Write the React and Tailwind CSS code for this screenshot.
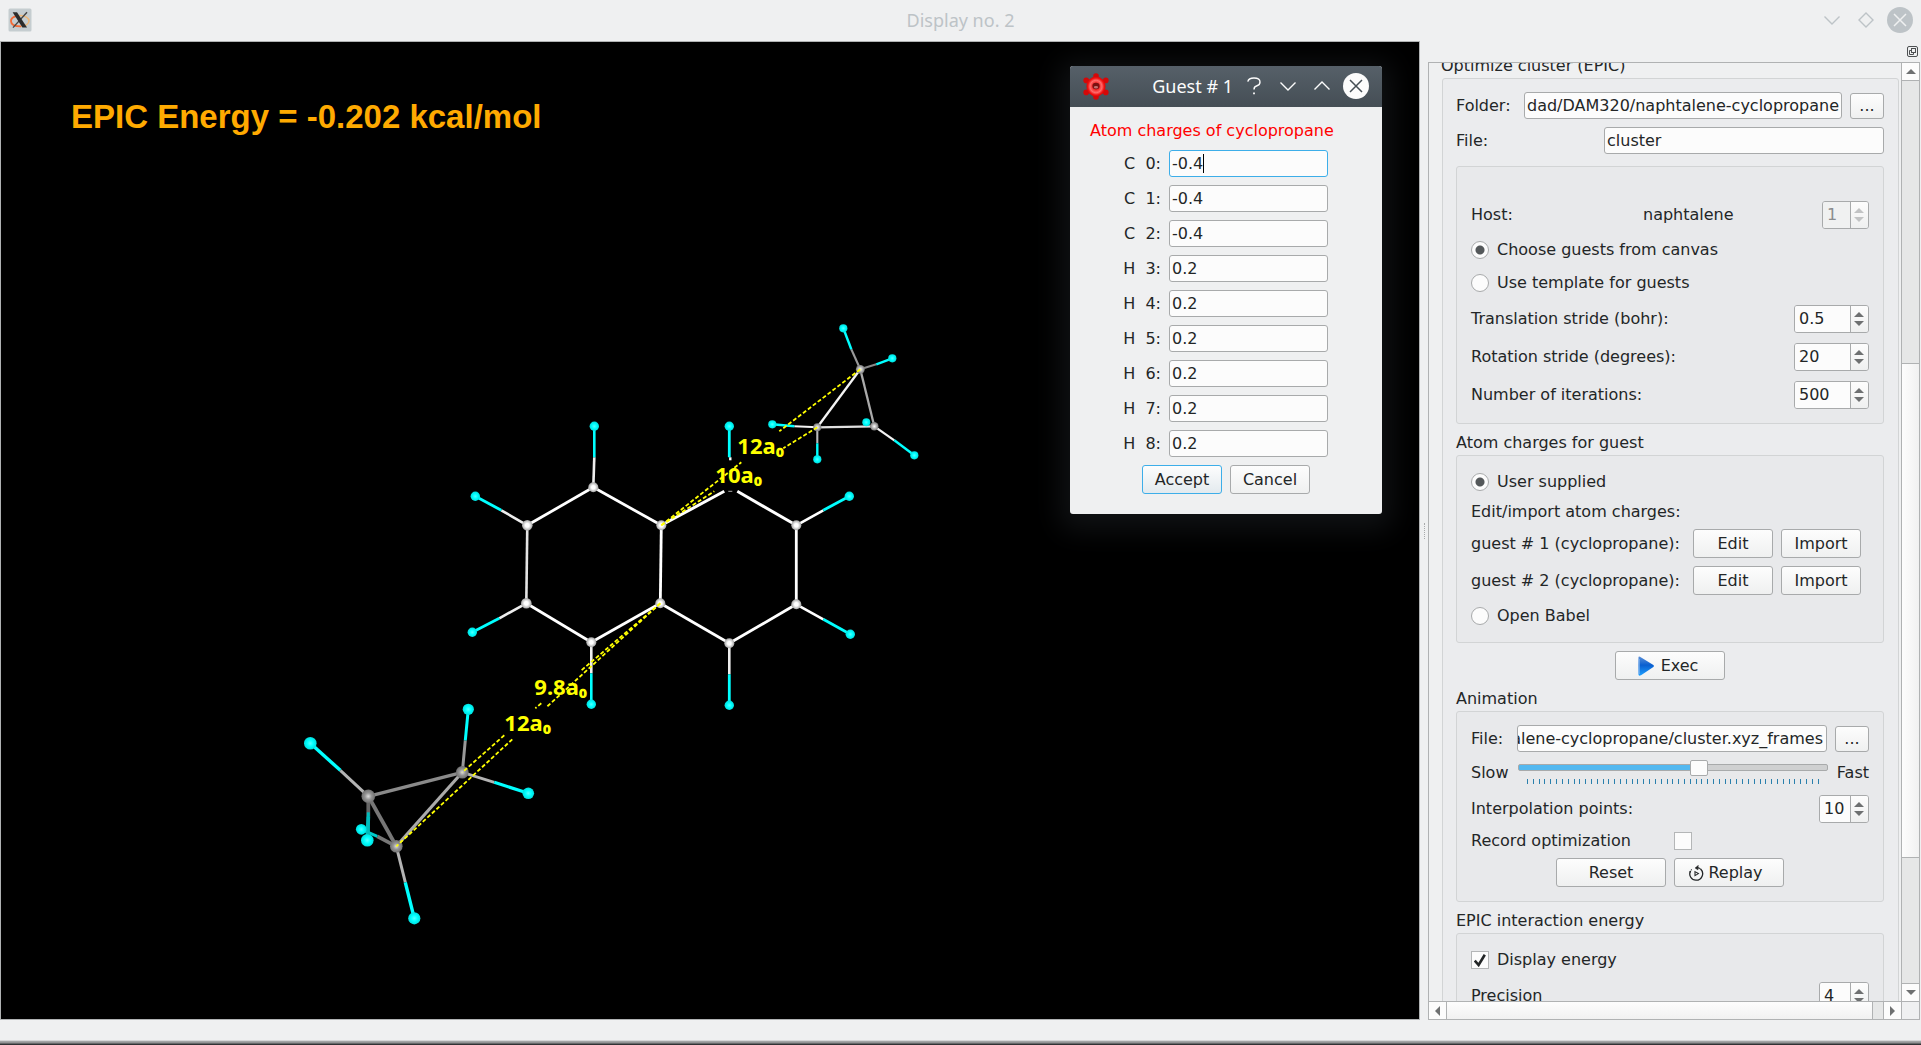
import React from "react";

const ATOM = {
  white: "url(#white)",
  gray: "url(#gray)",
  light: "url(#light)",
  cyan: "url(#cyan)",
};

// x1, y1, x2, y2, colour, width
const BONDS = [
  [593, 487, 527, 525, "#fff", 2.8],
  [527, 525, 526, 603, "#e4e4e4", 2.6],
  [526, 603, 591, 642, "#fff", 2.8],
  [591, 642, 660, 603, "#fff", 2.8],
  [660, 603, 661, 525, "#fff", 2.8],
  [661, 525, 593, 487, "#fff", 2.8],
  [661, 525, 724, 491, "#fff", 3],
  [737, 491, 796, 525, "#fff", 3],
  [728, 491, 732, 491, "#aaa", 1],
  [796, 525, 796, 604, "#fff", 2.8],
  [796, 604, 729, 643, "#fff", 2.8],
  [729, 643, 660, 603, "#fff", 2.8],
  [593, 487, 594, 457, "#eee", 2.6],
  [594, 457, 594, 426, "#0ff", 2.6],
  [527, 525, 501, 510, "#eee", 2.6],
  [501, 510, 475, 496, "#0ff", 2.8],
  [526, 603, 499, 618, "#eee", 2.6],
  [499, 618, 472, 632, "#0ff", 2.8],
  [591, 642, 591, 673, "#eee", 2.6],
  [591, 673, 591, 704, "#0ff", 2.6],
  [729, 643, 729, 674, "#eee", 2.6],
  [729, 674, 729, 705, "#0ff", 2.8],
  [796, 604, 823, 619, "#fff", 2.6],
  [823, 619, 850, 634, "#0ff", 2.8],
  [796, 525, 823, 510, "#fff", 2.6],
  [823, 510, 849, 496, "#0ff", 2.8],
  [729, 426, 729, 457, "#0ff", 2.8],
  [730, 457, 730, 460, "#fff", 2.4],

  [860, 369, 817, 427, "#f4f4f4", 2.3],
  [860, 369, 874, 426, "#aaa", 2.3],
  [817, 427, 874, 426, "#e0e0e0", 2.3],
  [860, 369, 851, 349, "#999", 2.1],
  [851, 349, 843, 328, "#0ff", 2.4],
  [860, 369, 876, 364, "#888", 2.1],
  [876, 364, 892, 358, "#0ff", 2.4],
  [817, 427, 794, 426, "#f4f4f4", 2.1],
  [794, 426, 772, 424, "#0ff", 2.4],
  [817, 427, 817, 443, "#bbb", 2.1],
  [817, 443, 817, 459, "#0ff", 2.4],
  [874, 426, 894, 440, "#f4f4f4", 2.2],
  [894, 440, 914, 455, "#0ff", 2.4],

  [396, 846, 377, 836, "#777", 3.6],
  [377, 836, 361, 829, "#0cc", 3],
  [368, 796, 396, 846, "#777", 3.8],
  [462, 772, 368, 796, "#8a8a8a", 3.4],
  [462, 772, 396, 846, "#aaa", 3.2],
  [462, 772, 465, 740, "#999", 3],
  [465, 740, 468, 709, "#0ff", 3],
  [462, 772, 494, 782, "#b4b4b4", 2.8],
  [494, 782, 528, 793, "#0ff", 3.2],
  [368, 796, 340, 770, "#b4b4b4", 3],
  [340, 770, 310, 743, "#0ff", 3.4],
  [368, 796, 368, 816, "#666", 3.8],
  [368, 816, 367, 840, "#0bb", 3.8],
  [396, 846, 405, 882, "#b4b4b4", 3],
  [405, 882, 414, 918, "#0ff", 3.4],
];

// x, y, radius, fill
const ATOMS = [
  [593, 487, 5, "white"],
  [527, 525, 5.3, "white"],
  [526, 603, 5.3, "white"],
  [591, 642, 5, "white"],
  [660, 603, 5, "white"],
  [661, 525, 5, "white"],
  [796, 525, 5, "white"],
  [796, 604, 5, "white"],
  [729, 643, 5, "white"],
  [594, 426, 4.7, "cyan"],
  [475, 496, 4.7, "cyan"],
  [472, 632, 4.7, "cyan"],
  [591, 704, 4.7, "cyan"],
  [729, 705, 4.7, "cyan"],
  [850, 634, 4.7, "cyan"],
  [849, 496, 4.7, "cyan"],
  [729, 426, 4.7, "cyan"],
  [860, 369, 4.4, "light"],
  [817, 427, 4, "light"],
  [866, 422, 4, "cyan"],
  [874, 426, 4.2, "light"],
  [843, 328, 4.1, "cyan"],
  [892, 358, 4.1, "cyan"],
  [772, 424, 4.1, "cyan"],
  [817, 459, 4.1, "cyan"],
  [914, 455, 4.1, "cyan"],
  [462, 772, 6.3, "gray"],
  [368, 796, 6.8, "gray"],
  [396, 846, 6.3, "gray"],
  [468, 709, 5.6, "cyan"],
  [528, 793, 5.8, "cyan"],
  [310, 743, 6.3, "cyan"],
  [361, 829, 5.4, "cyan"],
  [367, 840, 6.3, "cyan"],
  [414, 918, 6.1, "cyan"],
];

const DASHES = [
  [860, 369, 779, 431],
  [817, 427, 783, 448],
  [661, 525, 741, 462],
  [661, 525, 714, 491],
  [660, 603, 580, 671],
  [660, 603, 546, 707],
  [541, 703, 535, 708],
  [504, 735, 462, 772],
  [512, 739, 396, 846],
];

const DISTANCES = [
  [737, 454, "12a₀"],
  [715, 483, "10a₀"],
  [534, 695, "9.8a₀"],
  [504, 731, "12a₀"],
];

function Molecules() {
  return (
    <svg className="absolute left-0 top-0" width="1418" height="977" viewBox="0.7 41.7 1418 977" aria-label="Naphtalene with two cyclopropane guests">
      <defs>
        <radialGradient id="white">
          <stop offset="0.35" stopColor="#fff" />
          <stop offset="1" stopColor="#a4a4a4" />
        </radialGradient>
        <radialGradient id="light">
          <stop offset="0" stopColor="#fff" />
          <stop offset="1" stopColor="#777" />
        </radialGradient>
        <radialGradient id="gray">
          <stop offset="0" stopColor="#ddd" />
          <stop offset="0.5" stopColor="#949494" />
          <stop offset="1" stopColor="#707070" />
        </radialGradient>
        <radialGradient id="cyan">
          <stop offset="0" stopColor="#5ff" />
          <stop offset="0.5" stopColor="#0ff" />
          <stop offset="1" stopColor="#00dede" />
        </radialGradient>
      </defs>
      {BONDS.map(([x1, y1, x2, y2, c, w], i) => (
        <line key={i} x1={x1} y1={y1} x2={x2} y2={y2} stroke={c} strokeWidth={w} />
      ))}
      {ATOMS.map(([x, y, r, f], i) => (
        <circle key={i} cx={x} cy={y} r={r} fill={ATOM[f]} />
      ))}
      <path d="M368 812V834" stroke="#0bb" strokeWidth="3" />
      {DASHES.map(([x1, y1, x2, y2], i) => (
        <line key={i} x1={x1} y1={y1} x2={x2} y2={y2} stroke="#ff0" strokeWidth="1.8" strokeDasharray="4 2.2" />
      ))}
      {DISTANCES.map(([x, y, t], i) => (
        <text key={i} x={x} y={y} fill="#ff0" className="font-['Noto_Sans',sans-serif] text-[22px] font-bold">
          {t}
        </text>
      ))}
    </svg>
  );
}

const FIELD =
  "h-[27px] min-w-0 rounded-[3px] border border-[#a8aaab] bg-[#fcfcfc] px-0.5 text-[#232627] outline-none";
const BTN =
  "flex shrink-0 items-center justify-center rounded-[3px] border border-[#a8aaab] bg-linear-to-b from-[#fdfdfd] to-[#eff0f0] text-[#232627]";

function Button({ className = "", children, ...rest }) {
  return (
    <button type="button" className={`${BTN} ${className}`} {...rest}>
      {children}
    </button>
  );
}

function Arrow({ dir, className = "" }) {
  const d = { up: "M0 5L5 0L10 5Z", down: "M0 0L5 5L10 0Z", left: "M5 0V10L0 5Z", right: "M0 0V10L5 5Z" }[dir];
  const flat = dir === "up" || dir === "down";
  return (
    <svg className={className} width={flat ? 10 : 5} height={flat ? 5 : 10} viewBox={flat ? "0 0 10 5" : "0 0 5 10"} fill="currentColor" aria-hidden="true">
      <path d={d} />
    </svg>
  );
}

function Spin({ id, value, width, disabled, label }) {
  return (
    <div
      className={`flex h-7 shrink-0 overflow-hidden rounded-[3px] border border-[#a8aaab] ${width} ${disabled ? "text-[#8a8c8d]" : "text-[#232627]"}`}
    >
      <input
        id={id}
        aria-label={label}
        disabled={disabled}
        defaultValue={value}
        className={`w-0 min-w-0 flex-1 pl-1 outline-none ${disabled ? "bg-[#f0f1f1]" : "bg-[#fcfcfc]"}`}
      />
      <div
        className={`flex w-[18px] flex-col items-center border-l border-[#a8aaab] bg-linear-to-b from-[#fdfdfd] to-[#eff0f0] pr-px ${disabled ? "text-[#c2c3c4]" : "text-[#6e7071]"}`}
      >
        <button type="button" disabled={disabled} aria-label="Increase" className="flex flex-1 items-center justify-center pt-1">
          <Arrow dir="up" />
        </button>
        <button type="button" disabled={disabled} aria-label="Decrease" className="flex flex-1 items-center justify-center pb-1">
          <Arrow dir="down" />
        </button>
      </div>
    </div>
  );
}

function Radio({ name, label, checked, className = "" }) {
  return (
    <label className={`flex items-center gap-2 ${className}`}>
      <input
        type="radio"
        name={name}
        defaultChecked={checked}
        className="size-[18px] shrink-0 appearance-none rounded-full border border-[#a8aaab] bg-[#fcfcfc] checked:bg-[radial-gradient(circle,#54585a_0_4px,#fcfcfc_5px)]"
      />
      {label}
    </label>
  );
}

function Check({ id, checked, label }) {
  return (
    <span className="relative grid size-[18px] shrink-0 place-items-center">
      <input
        id={id}
        type="checkbox"
        aria-label={label}
        defaultChecked={checked}
        className="peer col-start-1 row-start-1 size-[18px] appearance-none border border-[#b4b6b7] bg-[#fcfcfc]"
      />
      <svg className="pointer-events-none col-start-1 row-start-1 hidden peer-checked:block" width="12" height="13" viewBox="0 0 12 13" aria-hidden="true">
        <path d="M0.8 6.6L4.6 11L10.8 0.8" fill="none" stroke="#232627" strokeWidth="2.6" />
      </svg>
    </span>
  );
}

const GROUP = "rounded-[3px] border border-[#d2d4d5] bg-[#e8e9eb] px-[14px]";

function Slider() {
  const ticks = Array.from({ length: 51 }, (_, i) => i);
  return (
    <div className="flex-1">
      <div className="grid h-[15px] items-center">
        <input
          type="range"
          aria-label="Speed"
          min="0"
          max="100"
          defaultValue="59"
          className="col-start-1 row-start-1 h-[15px] w-full appearance-none bg-transparent [&::-webkit-slider-runnable-track]:h-[7px] [&::-webkit-slider-runnable-track]:rounded-[2px] [&::-webkit-slider-runnable-track]:border [&::-webkit-slider-runnable-track]:border-[#a8aaab] [&::-webkit-slider-runnable-track]:bg-[linear-gradient(90deg,#53b8f0_0_58%,#cfd0d1_58%)] [&::-webkit-slider-thumb]:-mt-[5px] [&::-webkit-slider-thumb]:h-4 [&::-webkit-slider-thumb]:w-[18px] [&::-webkit-slider-thumb]:appearance-none [&::-webkit-slider-thumb]:rounded-[2px] [&::-webkit-slider-thumb]:border [&::-webkit-slider-thumb]:border-[#a8aaab] [&::-webkit-slider-thumb]:bg-[#fcfcfc]"
        />
      </div>
      <div className="mt-1 flex h-[5px] justify-between px-[9px]">
        {ticks.map((i) => (
          <span key={i} className="w-px bg-[#2a80ad]" />
        ))}
      </div>
    </div>
  );
}

function Dock() {
  return (
    <div className="-mt-[10px] flex flex-col pl-3 pr-0.5">
      <h2 className="h-[25px] leading-[25px]">Optimize cluster (EPIC)</h2>
      <section className="ml-px flex flex-col rounded-[3px] border border-[#d2d4d5] bg-[#ebecee] pl-[13px] pr-[14px] pt-[13px]">
        <div className="flex items-center">
          <label htmlFor="folder" className="w-[68px]">Folder:</label>
          <input id="folder" defaultValue="dad/DAM320/naphtalene-cyclopropane" className={`${FIELD} w-0 flex-1`} />
          <Button className="ml-2 h-[26px] w-[34px]" aria-label="Browse folder">...</Button>
        </div>
        <div className="mt-2 flex items-center justify-between">
          <label htmlFor="file">File:</label>
          <input id="file" defaultValue="cluster" className={`${FIELD} w-[280px]`} />
        </div>

        <div className={`${GROUP} mt-3 pb-[14px] pt-[34px]`}>
          <div className="flex items-center">
            <label htmlFor="host" className="w-[172px]">Host:</label>
            <span className="flex-1">naphtalene</span>
            <Spin id="host" value="1" width="w-[47px]" disabled />
          </div>
          <Radio name="guests" label="Choose guests from canvas" checked className="mt-[9px] h-6" />
          <Radio name="guests" label="Use template for guests" className="mt-[9px] h-6" />
          <div className="mt-[10px] flex flex-col gap-[10px]">
            <div className="flex items-center justify-between">
              <label htmlFor="trans">Translation stride (bohr):</label>
              <Spin id="trans" value="0.5" width="w-[75px]" />
            </div>
            <div className="flex items-center justify-between">
              <label htmlFor="rot">Rotation stride (degrees):</label>
              <Spin id="rot" value="20" width="w-[75px]" />
            </div>
            <div className="flex items-center justify-between">
              <label htmlFor="iter">Number of iterations:</label>
              <Spin id="iter" value="500" width="w-[75px]" />
            </div>
          </div>
        </div>

        <h3 className="mt-[7px] h-6 leading-6">Atom charges for guest</h3>
        <div className={`${GROUP} py-[14px]`}>
          <Radio name="charges" label="User supplied" checked className="h-6" />
          <p className="mt-[6px] h-6 leading-6">Edit/import atom charges:</p>
          <div className="mb-[9px] mt-[5px] flex flex-col gap-2">
            {[1, 2].map((n) => (
              <div key={n} className="flex items-center gap-2">
                <span className="flex-1">guest # {n} (cyclopropane):</span>
                <Button className="h-[29px] w-20">Edit</Button>
                <Button className="mr-2 h-[29px] w-20">Import</Button>
              </div>
            ))}
          </div>
          <Radio name="charges" label="Open Babel" className="h-6" />
        </div>

        <Button className="mt-2 h-[29px] w-[110px] gap-[7px] self-center pr-1">
          <svg width="16" height="20" viewBox="0 0 16 20" aria-hidden="true">
            <defs>
              <linearGradient id="play" x1="0" y1="0" x2="0" y2="1">
                <stop offset="0" stopColor="#5a8fd8" />
                <stop offset="0.45" stopColor="#0a5fd0" />
                <stop offset="1" stopColor="#1ea0ff" />
              </linearGradient>
            </defs>
            <path d="M0.5 1.5Q0.5 0 2 0.8L15.4 9Q16.4 10 15.4 11L3 19.2Q0.5 20.4 0.5 18.5Z" fill="url(#play)" />
            <path d="M1.2 3V18" stroke="#7fb2ee" strokeWidth="1" />
          </svg>
          Exec
        </Button>

        <h3 className="mt-[7px] h-6 leading-6">Animation</h3>
        <div className={`${GROUP} pb-[14px] pt-[13px]`}>
          <div className="flex items-center">
            <label htmlFor="frames" className="w-[46px]">File:</label>
            <div className={`${FIELD} flex w-0 flex-1 justify-end overflow-hidden`}>
              <input id="frames" defaultValue="alene-cyclopropane/cluster.xyz_frames" className="w-[316px] shrink-0 bg-transparent pr-px text-right outline-none" />
            </div>
            <Button className="ml-2 h-[26px] w-[34px]" aria-label="Browse animation file">...</Button>
          </div>
          <div className="mt-2 flex h-6">
            <span className="w-[47px] leading-[26px]">Slow</span>
            <Slider />
            <span className="ml-[9px] leading-[26px]">Fast</span>
          </div>
          <div className="mt-[11px] flex items-center justify-between">
            <label htmlFor="interp">Interpolation points:</label>
            <Spin id="interp" value="10" width="w-[50px]" />
          </div>
          <div className="mt-[6px] flex h-6 items-center">
            <label htmlFor="record" className="w-[203px]">Record optimization</label>
            <Check id="record" />
          </div>
          <div className="mt-[5px] flex justify-center gap-2">
            <Button className="h-[29px] w-[110px]">Reset</Button>
            <Button className="h-[29px] w-[110px] gap-1 pr-[6px]">
              <svg width="15" height="16" viewBox="0 0 15 16" fill="none" stroke="#232627" aria-hidden="true">
                <path d="M1.4 6.2A6.3 6.3 0 0 0 7 15.2A6.5 6.5 0 0 0 11.6 4" strokeWidth="1.3" />
                <path d="M1 7.5Q1.6 5.4 2.8 4.6" strokeWidth="1.3" strokeDasharray="1.5 1" />
                <path d="M6 3L9.4 0.2L9 2Q10.8 2.6 12 4.4Q10 3.4 8.8 3.6L9 5Z" fill="#232627" strokeWidth="0.4" />
                <path d="M6 6.6L9.4 8.6L6 10.6Z" strokeWidth="1.1" />
              </svg>
              Replay
            </Button>
          </div>
        </div>

        <h3 className="mt-[7px] h-6 leading-6">EPIC interaction energy</h3>
        <div className={`${GROUP} pb-6 pt-[14px]`}>
          <label className="flex h-6 items-center gap-2">
            <Check checked />
            Display energy
          </label>
          <div className="mt-[10px] flex items-center justify-between">
            <label htmlFor="prec">Precision</label>
            <Spin id="prec" value="4" width="w-[50px]" />
          </div>
        </div>
      </section>
    </div>
  );
}

const CHARGES = [
  ["C", "-0.4"],
  ["C", "-0.4"],
  ["C", "-0.4"],
  ["H", "0.2"],
  ["H", "0.2"],
  ["H", "0.2"],
  ["H", "0.2"],
  ["H", "0.2"],
  ["H", "0.2"],
];

function GuestDialog() {
  return (
    <div
      role="dialog"
      aria-label="Guest # 1"
      className="absolute right-[37px] top-6 w-[312px] overflow-hidden rounded-[3px] bg-[#eff0f1] shadow-[0_6px_28px_10px_#101214]"
    >
      <header className="flex h-[41px] items-center bg-linear-to-b from-[#566069] to-[#454e55] px-[13px] pb-px text-[#fcfcfc]">
        <svg width="26" height="27" viewBox="0 0 26 27" aria-hidden="true">
          <defs>
            <radialGradient id="gear">
              <stop offset="0.3" stopColor="#f02020" />
              <stop offset="0.62" stopColor="#ff6a6a" />
              <stop offset="0.85" stopColor="#f01010" />
              <stop offset="1" stopColor="#d80808" />
            </radialGradient>
          </defs>
          <g fill="#d40808">
            <circle cx="13" cy="3" r="2.8" />
            <circle cx="13" cy="24" r="2.8" />
            <circle cx="3.2" cy="7.4" r="2.8" />
            <circle cx="22.8" cy="7.4" r="2.8" />
            <circle cx="3.2" cy="19.4" r="2.8" />
            <circle cx="22.8" cy="19.4" r="2.8" />
          </g>
          <ellipse cx="13" cy="13.5" rx="9.6" ry="10" fill="url(#gear)" />
          <ellipse cx="13" cy="13" rx="3.6" ry="3.2" fill="#7a1010" />
          <ellipse cx="13" cy="14.2" rx="2.2" ry="1.3" fill="#c07070" />
        </svg>
        <span className="ml-auto mr-[14px] font-['Noto_Sans',sans-serif] text-[18px]">Guest # 1</span>
        <button type="button" aria-label="Help" className="mr-[19px]">
          <svg width="14" height="18" viewBox="0 0 14 18" fill="none" stroke="currentColor" strokeWidth="1.4" aria-hidden="true">
            <path d="M0.8 4.6Q1.6 1 7 1Q13 1 13 5Q13 8 10 8.8Q7 9.6 7 12.6" />
            <path d="M7 15.6V17.2" strokeWidth="1.8" />
          </svg>
        </button>
        <button type="button" aria-label="Minimize" className="mr-[18px]">
          <svg width="16" height="18" viewBox="0 0 16 18" fill="none" stroke="currentColor" strokeWidth="1.4" aria-hidden="true">
            <path d="M0.5 5.5L8 13L15.5 5.5" />
          </svg>
        </button>
        <button type="button" aria-label="Maximize" className="mr-[13px]">
          <svg width="16" height="18" viewBox="0 0 16 18" fill="none" stroke="currentColor" strokeWidth="1.4" aria-hidden="true">
            <path d="M0.5 12.5L8 5L15.5 12.5" />
          </svg>
        </button>
        <button type="button" aria-label="Close">
          <svg width="26" height="26" viewBox="0 0 26 26" aria-hidden="true">
            <circle cx="13" cy="13" r="13" fill="#fcfcfc" />
            <path d="M7 7L19 19M19 7L7 19" stroke="#454e55" strokeWidth="1.5" />
          </svg>
        </button>
      </header>
      <div className="px-5 pb-5 pt-3">
        <h2 className="h-6 leading-6 text-[#ff0000]">Atom charges of cyclopropane</h2>
        <div className="mt-[7px] flex flex-col gap-2">
          {CHARGES.map(([el, q], i) => (
            <div key={i} className="flex items-center">
              <label htmlFor={`q${i}`} className="w-[71px] whitespace-pre text-right">{`${el}  ${i}:`}</label>
              <div className={`${FIELD} ml-2 flex w-[159px] items-center ${i === 0 ? "border-[#3daee9]!" : ""}`}>
                <input
                  id={`q${i}`}
                  defaultValue={q}
                  size={1}
                  className={`min-w-0 outline-none ${i === 0 ? "w-[31px]" : "w-full"}`}
                />
                {i === 0 && <span className="h-[19px] w-px bg-black" />}
              </div>
            </div>
          ))}
        </div>
        <div className="mt-2 flex justify-center gap-2">
          <Button className="h-[29px] w-20 border-[#3daee9]! to-[#e3eaee]!">Accept</Button>
          <Button className="h-[29px] w-20">Cancel</Button>
        </div>
      </div>
    </div>
  );
}

function XIcon() {
  return (
    <svg width="24" height="24" viewBox="0 0 24 24" aria-hidden="true">
      <rect x="0.5" y="0.5" width="23" height="23" rx="1.5" fill="#c5cdd0" />
      <ellipse cx="12" cy="13" rx="9" ry="5.4" fill="none" stroke="#f0b878" strokeWidth="1.5" />
      <path d="M8 8.2Q3 9.6 3 13Q3 18.4 13 18.4" fill="none" stroke="#f26a3a" strokeWidth="1.8" />
      <path d="M19 4.2L5 19.6" stroke="#444" strokeWidth="1.4" />
      <path d="M4.6 4.2H9L19 19.6H14.4Z" fill="#2c2c2c" />
    </svg>
  );
}

export default function App() {
  return (
    <div className="flex h-screen flex-col overflow-hidden bg-[#eff0f1] font-['DejaVu_Sans',sans-serif] text-base leading-5 text-[#232627]">
      <header className="grid h-[41px] shrink-0 grid-cols-[1fr_auto_1fr] items-center px-2 pb-px">
        <XIcon />
        <h1 className="font-['Noto_Sans',sans-serif] text-[18px] text-[#bdc3c7]">Display no. 2</h1>
        <div className="flex items-center justify-end text-[#bdc3c7]">
          <button type="button" aria-label="Minimize" className="mr-[18px]">
            <svg width="16" height="18" viewBox="0 0 16 18" fill="none" stroke="currentColor" strokeWidth="1.4" aria-hidden="true">
              <path d="M0.5 5.5L8 13L15.5 5.5" />
            </svg>
          </button>
          <button type="button" aria-label="Restore" className="mr-[13px]">
            <svg width="16" height="16" viewBox="0 0 16 16" fill="none" stroke="currentColor" strokeWidth="1.4" aria-hidden="true">
              <path d="M8 1L15 8L8 15L1 8Z" />
            </svg>
          </button>
          <button type="button" aria-label="Close">
            <svg width="26" height="26" viewBox="0 0 26 26" aria-hidden="true">
              <circle cx="13" cy="13" r="13" fill="#bdc3c7" />
              <path d="M7 7L19 19M19 7L7 19" stroke="#eff0f1" strokeWidth="1.5" />
            </svg>
          </button>
        </div>
      </header>

      <div className="flex min-h-0 flex-1">
        <main className="relative min-w-0 flex-1 overflow-hidden border border-[#b0b2b3] bg-black">
          <Molecules />
          <p className="relative ml-[70px] mt-[55px] font-['Liberation_Sans',sans-serif] text-[33px] font-bold leading-[40px] text-[#ffaa00]">
            EPIC Energy = -0.202 kcal/mol
          </p>
          <GuestDialog />
        </main>

        <div className="flex w-2 shrink-0 items-center justify-center">
          <span className="h-4 border-l border-dotted border-[#a8aaab]" />
        </div>

        <aside className="flex w-[493px] shrink-0 flex-col pr-px">
          <div className="flex h-[21px] shrink-0 items-center justify-end pr-0.5">
            <button type="button" aria-label="Float panel">
              <svg width="11" height="11" viewBox="0 0 11 11" fill="none" stroke="#4d5052" aria-hidden="true">
                <rect x="0.5" y="0.5" width="10" height="10" rx="1.5" />
                <rect x="4.5" y="2.5" width="4" height="4" />
                <path d="M4.5 4.5H2.5V8.5H6.5V6.5" />
              </svg>
            </button>
          </div>
          <div className="grid min-h-0 flex-1 grid-cols-[1fr_18px] grid-rows-[1fr_18px] border border-[#b0b2b3]">
            <div className="min-h-0 overflow-hidden">
              <Dock />
            </div>
            <div className="flex min-h-0 flex-col border-l border-[#b0b2b3] bg-[#e6e7e7] text-[#6e7071]">
              <button type="button" aria-label="Scroll up" className="flex h-[18px] shrink-0 items-center justify-center border-b border-[#b0b2b3] bg-[#fcfcfc]">
                <Arrow dir="up" />
              </button>
              <div className="flex-[283]" />
              <div className="flex-[494] border-y border-[#b0b2b3] bg-linear-to-r from-[#fdfdfd] to-[#f1f1f1]" />
              <div className="flex-[125]" />
              <button type="button" aria-label="Scroll down" className="flex h-[18px] shrink-0 items-center justify-center border-t border-[#b0b2b3] bg-[#fcfcfc]">
                <Arrow dir="down" />
              </button>
            </div>
            <div className="flex border-t border-[#b0b2b3] bg-[#e6e7e7] text-[#6e7071]">
              <button type="button" aria-label="Scroll left" className="flex w-[18px] items-center justify-center border-r border-[#b0b2b3] bg-[#fcfcfc]">
                <Arrow dir="left" />
              </button>
              <div className="flex-1 border-r border-[#b0b2b3] bg-linear-to-b from-[#fdfdfd] to-[#f1f1f1]" />
              <div className="w-[10px]" />
              <button type="button" aria-label="Scroll right" className="flex w-[18px] items-center justify-center border-l border-[#b0b2b3] bg-[#fcfcfc]">
                <Arrow dir="right" />
              </button>
            </div>
            <div className="border-l border-t border-[#b0b2b3]" />
          </div>
        </aside>
      </div>
      <footer className="h-[25px] shrink-0 bg-[linear-gradient(#eff0f1_0_20px,#8a8c8d_22px,#9a9c9d_23px,#303234_24px)]" />
    </div>
  );
}
